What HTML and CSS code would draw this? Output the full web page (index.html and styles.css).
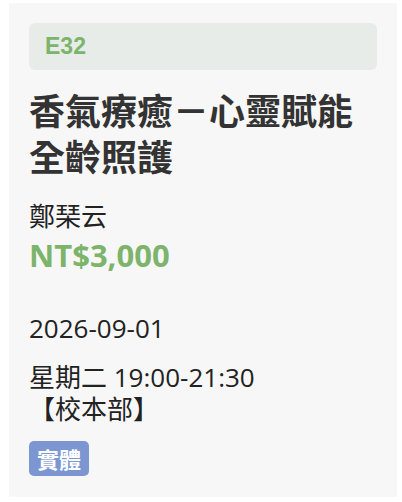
FILE: index.html
```html
<!DOCTYPE html>
<html lang="zh-Hant">
  <head>
    <meta charset="UTF-8" />
    <meta name="viewport" content="width=device-width, initial-scale=1.0" />
    <title>課程資訊</title>
    <link rel="stylesheet" href="styles.css">
  </head>
  <body>
    <div class="course-card">
      <div class="course-code">E32</div>
      <h2 class="course-title">香氣療癒－心靈賦能全齡照護</h2>
      <div class="course-teacher">鄭琹云</div>
      <div class="course-price">NT$3,000</div>
      <div class="course-date">2026-09-01</div>
      <div class="course-time">星期二 19:00-21:30<br>【校本部】</div>
      <div class="course-tags">
        <span class="course-tag">實體</span>
      </div>
    </div>
  </body>
</html>
```

FILE: styles.css
```css
body {
  font-family: "Open Sans", "Noto Sans CJK TC", sans-serif;
  margin: 0;
  padding: 3px 5px 5px 9px;
  background-color: #fff;
  color: #222;
}
.course-card {
  background-color: #f7f7f7;
  padding: 20px 20px 21px 20px;
}
.course-code {
  background-color: #e7ece8;
  border-radius: 6px;
  padding: 11px 16px;
  height: 25px;
  font-family: "Liberation Sans", Arial, sans-serif;
  font-weight: bold;
  font-size: 23px;
  line-height: 25px;
  color: #7db46c;
}
.course-title {
  font-family: "Noto Sans CJK TC", sans-serif;
  font-size: 36px;
  line-height: 46px;
  font-weight: bold;
  color: #333;
  margin: 16px 0 0 0;
  width: 340px;
}
.course-teacher {
  font-family: "Noto Sans CJK TC", sans-serif;
  font-size: 26px;
  line-height: 34px;
  margin-top: 20px;
}
.course-price {
  font-size: 31px;
  font-weight: bold;
  color: #7db46c;
  line-height: 40px;
  margin-top: 3px;
}
.course-date {
  font-size: 26px;
  line-height: 34px;
  margin-top: 36px;
}
.course-time {
  font-size: 26px;
  line-height: 32px;
  margin-top: 16px;
}
.course-tags {
  display: flex;
  margin-top: 16px;
}
.course-tag {
  background-color: #7b96d0;
  color: #fff;
  font-family: "Noto Sans CJK TC", sans-serif;
  font-weight: bold;
  font-size: 22px;
  line-height: 35px;
  padding: 0 8px;
  border-radius: 5px;
}
```
